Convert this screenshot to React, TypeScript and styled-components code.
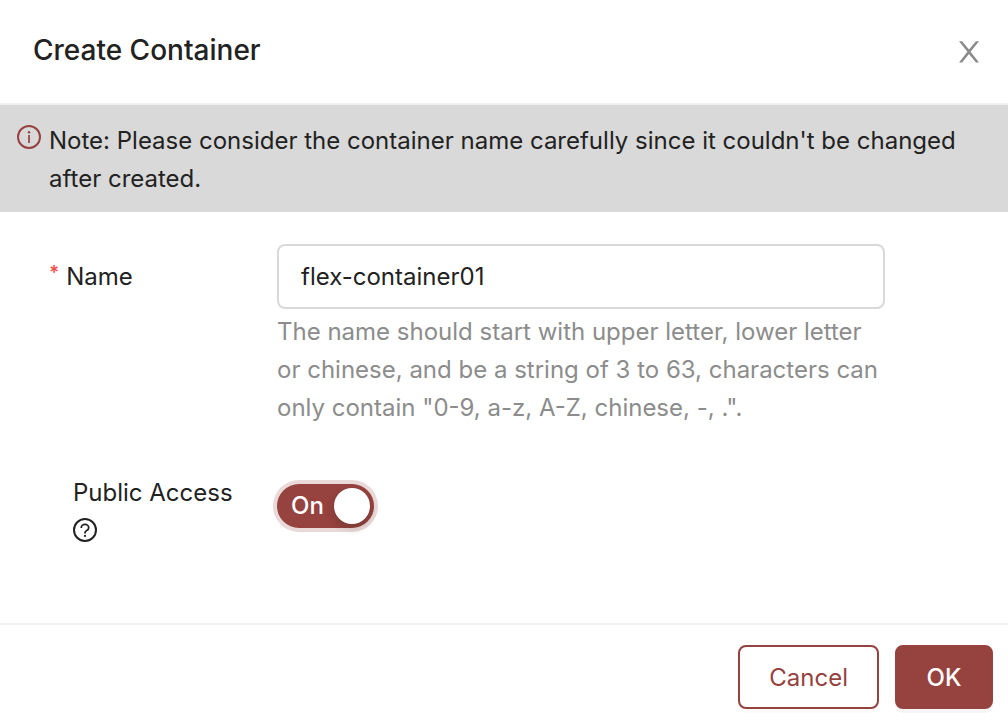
import React, { useState } from "react";
import styled, { createGlobalStyle } from "styled-components";

const GlobalStyle = createGlobalStyle`
  * { box-sizing: border-box; }
  body {
    margin: 0;
    background: #fff;
    color: #222;
    font-family: Inter, "Liberation Sans", sans-serif;
    font-size: 24px;
    line-height: 38px;
  }
  button, input { font: inherit; }
`;

const Dialog = styled.form`
  display: flex;
  flex-direction: column;
`;

const Header = styled.header`
  display: flex;
  align-items: center;
  justify-content: space-between;
  height: 105px;
  padding: 0 26px 4px 33px;
  border-bottom: 2px solid #efefef;
`;

const Title = styled.h1`
  margin: 0;
  font-size: 28px;
  font-weight: 500;
  line-height: 44px;
`;

const CloseButton = styled.button`
  display: flex;
  padding: 4px 0 0;
  border: 0;
  background: none;
  color: #8a8a8a;
  cursor: pointer;
`;

const Note = styled.div`
  display: flex;
  gap: 8px;
  padding: 17px 32px 14px 17px;
  background: #d9d9d9;

  svg { flex: none; margin-top: 3px; color: #96423f; }
  p { margin: 0; }
`;

const Body = styled.div`
  display: flex;
  flex-direction: column;
  gap: 47px;
  padding: 32px 123px 81px 49px;
`;

const Row = styled.div`
  display: grid;
  grid-template-columns: 228px 1fr;
`;

const NameLabel = styled.label`
  display: flex;
  gap: 7px;
  padding-top: 14px;
`;

const Required = styled.span`
  color: #f0504c;
  font-size: 19px;
  font-weight: 600;
  line-height: 30px;
`;

const NameInput = styled.input`
  display: block;
  width: 100%;
  height: 65px;
  padding: 0 22px;
  border: 2px solid #d9d9d9;
  border-radius: 8px;
  background: #fff;
  color: #222;
  outline: none;
`;

const Hint = styled.p`
  margin: 4px 0 0;
  color: #8c8c8c;
`;

const AccessLabel = styled.label`
  display: flex;
  flex-direction: column;
  padding-left: 24px;

  svg { margin-top: 6px; }
`;

const Switch = styled.button<{ $on: boolean }>`
  display: flex;
  align-items: center;
  justify-content: space-between;
  flex-direction: ${(p) => (p.$on ? "row" : "row-reverse")};
  width: 97px;
  height: 44px;
  margin-top: 10px;
  padding: 0 4px 0 14px;
  border: 0;
  border-radius: 22px;
  background: ${(p) => (p.$on ? "#96423f" : "#bfbfbf")};
  box-shadow: 0 0 0 4px #ead9d9;
  color: #fff;
  font-weight: 500;
  cursor: pointer;
`;

const Knob = styled.span`
  width: 36px;
  height: 36px;
  border-radius: 50%;
  background: #fff;
  box-shadow: 0 4px 8px rgba(0, 35, 11, 0.2);
`;

const Footer = styled.footer`
  display: flex;
  justify-content: flex-end;
  gap: 16px;
  padding: 20px 15px 12px;
  border-top: 2px solid #efefef;
`;

const ActionButton = styled.button<{ $primary?: boolean }>`
  min-width: 98px;
  height: 64px;
  padding: 1px 29px 0;
  border: 2px solid #96423f;
  border-radius: 8px;
  background: ${(p) => (p.$primary ? "#96423f" : "#fff")};
  box-shadow: 0 4px 0 ${(p) => (p.$primary ? "rgba(0, 0, 0, 0.04)" : "rgba(0, 0, 0, 0.02)")};
  color: ${(p) => (p.$primary ? "#fff" : "#96423f")};
  font-weight: ${(p) => (p.$primary ? 500 : 400)};
  cursor: pointer;
`;

export default function App() {
  const [name, setName] = useState("flex-container01");
  const [isPublic, setIsPublic] = useState(true);

  return (
    <>
      <GlobalStyle />
      <Dialog onSubmit={(e) => e.preventDefault()}>
        <Header>
          <Title>Create Container</Title>
          <CloseButton type="button" aria-label="Close">
            <svg width="26" height="26" viewBox="0 0 26 26" fill="currentColor">
              <path d="M3 2.3H6.1L13 10.6 19.9 2.3H23L14.6 12.8 23 23.4H19.9L13 15 6.1 23.4H3L11.4 12.8Z" />
            </svg>
          </CloseButton>
        </Header>
        <Note role="note">
          <svg width="24" height="24" viewBox="0 0 24 24" fill="none" stroke="currentColor" strokeWidth="2">
            <circle cx="12" cy="12" r="11" />
            <path d="M12 10v8" strokeWidth="1.7" />
            <circle cx="12" cy="7.2" r="1.2" fill="currentColor" stroke="none" />
          </svg>
          <p>Note: Please consider the container name carefully since it couldn't be changed after created.</p>
        </Note>
        <Body>
          <Row>
            <NameLabel htmlFor="name"><Required>*</Required>Name</NameLabel>
            <div>
              <NameInput id="name" required value={name} onChange={(e) => setName(e.target.value)} aria-describedby="name-hint" />
              <Hint id="name-hint">
                The name should start with upper letter, lower letter or chinese, and be a string of 3 to 63, characters can only contain "0-9, a-z, A-Z, chinese, -, .".
              </Hint>
            </div>
          </Row>
          <Row>
            <AccessLabel htmlFor="access">
              Public Access
              <svg width="24" height="24" viewBox="0 0 24 24" fill="none" stroke="currentColor" strokeWidth="2">
                <circle cx="12" cy="12" r="11" />
                <path d="M8.3 10.1V9.7a3.7 3.3 0 0 1 7.4 0c0 1.4-.9 2.5-2.2 3-.9.4-1.5 1.1-1.5 2v.7" strokeWidth="1.8" />
                <circle cx="12" cy="17.9" r="1.1" fill="currentColor" stroke="none" />
              </svg>
            </AccessLabel>
            <Switch id="access" type="button" role="switch" aria-checked={isPublic} $on={isPublic} onClick={() => setIsPublic(!isPublic)}>
              {isPublic ? "On" : "Off"}
              <Knob />
            </Switch>
          </Row>
        </Body>
        <Footer>
          <ActionButton type="button">Cancel</ActionButton>
          <ActionButton type="submit" $primary>OK</ActionButton>
        </Footer>
      </Dialog>
    </>
  );
}
